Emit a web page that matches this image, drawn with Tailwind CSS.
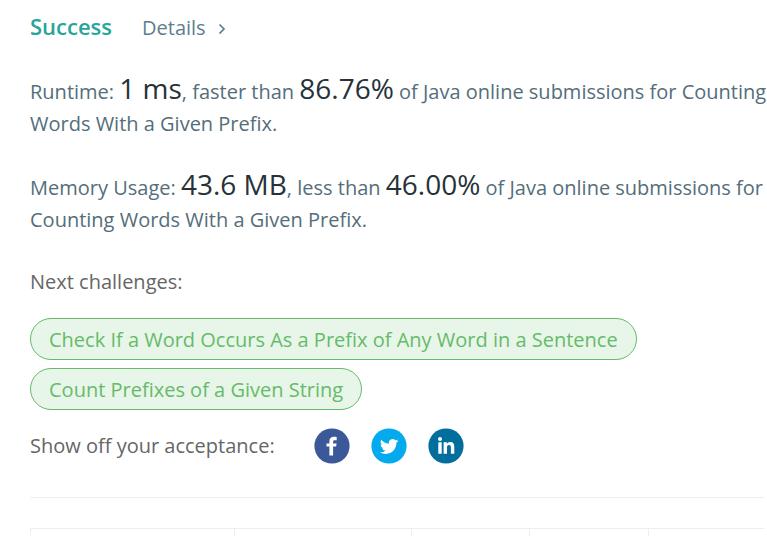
<!DOCTYPE html>
<html lang="en">
<head>
<meta charset="utf-8">
<meta name="viewport" content="width=device-width, initial-scale=1">
<title>Submission result</title>
<script src="https://cdn.jsdelivr.net/npm/@tailwindcss/browser@4"></script>
</head>
<body class="bg-white overflow-x-hidden font-['Segoe_UI','Open_Sans',sans-serif] text-[20px] leading-8 text-[#546e7a]">
<main class="h-screen overflow-hidden pl-[30px] pr-[3px] pt-2.5">
  <header class="flex items-baseline gap-[30px]">
    <h1 class="text-[22px] font-semibold text-[#26a69a]">Success</h1>
    <a href="#" class="flex items-center gap-3 text-[#607d8b]">Details
      <svg class="w-2 h-3" viewBox="0 0 8 12" fill="none" stroke="currentColor" stroke-width="1.7" aria-hidden="true"><path d="M1.500 2.500 6 7 1.500 11.500"/></svg>
    </a>
  </header>
  <p class="mt-8 -mr-1">Runtime: <span class="text-[28px] leading-6 text-[#263238]">1 ms</span>, faster than <span class="text-[28px] leading-6 text-[#263238]">86.76%</span> of Java online submissions for Counting Words With a Given Prefix.</p>
  <p class="mt-8">Memory Usage: <span class="text-[28px] leading-6 text-[#263238]">43.6 MB</span>, less than <span class="text-[28px] leading-6 text-[#263238]">46.00%</span> of Java online submissions for Counting Words With a Given Prefix.</p>
  <h2 class="mt-[30px] text-[#666]">Next challenges:</h2>
  <div class="mt-5 flex flex-col items-start gap-2">
    <a href="#" class="rounded-full border border-[#66bb6a] bg-[#e8f5e9] px-[18px] pt-[5px] pb-[3px] text-[#66bb6a]">Check If a Word Occurs As a Prefix of Any Word in a Sentence</a>
    <a href="#" class="rounded-full border border-[#66bb6a] bg-[#e8f5e9] px-[18px] pt-[5px] pb-[3px] text-[#66bb6a]">Count Prefixes of a Given String</a>
  </div>
  <div class="mt-[18px] flex items-center gap-[39px] text-[#666]">
    <span>Show off your acceptance:</span>
    <div class="flex gap-[21px]">
      <a href="#" aria-label="Share on Facebook"><svg class="size-9" viewBox="0 0 36 36"><circle cx="18" cy="18" r="17.600" fill="#3b5998"/><path fill="#fff" d="M15.400 27.600V18.500h-2.900v-3h2.900v-2.200c0-3 1.600-4.500 4.400-4.500 1.100 0 2 .1 2.900.2v3.200h-1.900c-1.300 0-1.700.6-1.700 1.600v1.700h3.500l-.5 3H19.100v9.100z"/></svg></a>
      <a href="#" aria-label="Share on Twitter"><svg class="size-9" viewBox="0 0 36 36"><circle cx="18" cy="18" r="17.600" fill="#03abee"/><path fill="#fff" transform="translate(9 9.400) scale(.76)" d="M23.950 4.570a10 10 0 0 1-2.820.775 4.960 4.960 0 0 0 2.160-2.723 9.900 9.900 0 0 1-3.130 1.184 4.920 4.920 0 0 0-8.380 4.482C7.690 8.100 4.070 6.130 1.640 3.160a4.920 4.920 0 0 0 1.520 6.574 4.900 4.900 0 0 1-2.230-.616v.060a4.920 4.920 0 0 0 3.950 4.827 4.960 4.960 0 0 1-2.210.085 4.940 4.940 0 0 0 4.600 3.417A9.870 9.870 0 0 1 0 19.540a13.990 13.990 0 0 0 7.550 2.212c9.050 0 14-7.500 14-13.985 0-.210 0-.420-.015-.630a9.940 9.940 0 0 0 2.460-2.548z"/></svg></a>
      <a href="#" aria-label="Share on LinkedIn"><svg class="size-9" viewBox="0 0 36 36"><circle cx="18" cy="18" r="17.600" fill="#026e9e"/><g fill="#fff"><circle cx="12" cy="11" r="2"/><path d="M10.300 14.200h3.400v11.500h-3.400zM15.600 14.200h3.300v1.600c.5-.9 1.700-1.900 3.400-1.900 3.400 0 4 2.300 4 5.300v6.500h-3.400v-5.900c0-1.300 0-2.900-1.800-2.900s-2.100 1.400-2.100 2.800v6h-3.400z"/></g></svg></a>
    </div>
  </div>
  <hr class="mt-[33px] border-[#eee]">
  <div class="mt-[30px] overflow-hidden">
  <table class="w-full table-fixed border-separate border-spacing-0" aria-label="Submissions">
    <colgroup><col class="w-[27.900%]"><col class="w-[24.100%]"><col class="w-[16.100%]"><col class="w-[16.200%]"><col></colgroup>
    <tbody><tr class="h-12"><td class="border-x border-t border-[#eee]"></td><td class="border-r border-t border-[#eee]"></td><td class="border-r border-t border-[#eee]"></td><td class="border-r border-t border-[#eee]"></td><td class="border-t border-[#eee]"></td></tr></tbody>
  </table>
  </div>
</main>
</body>
</html>
